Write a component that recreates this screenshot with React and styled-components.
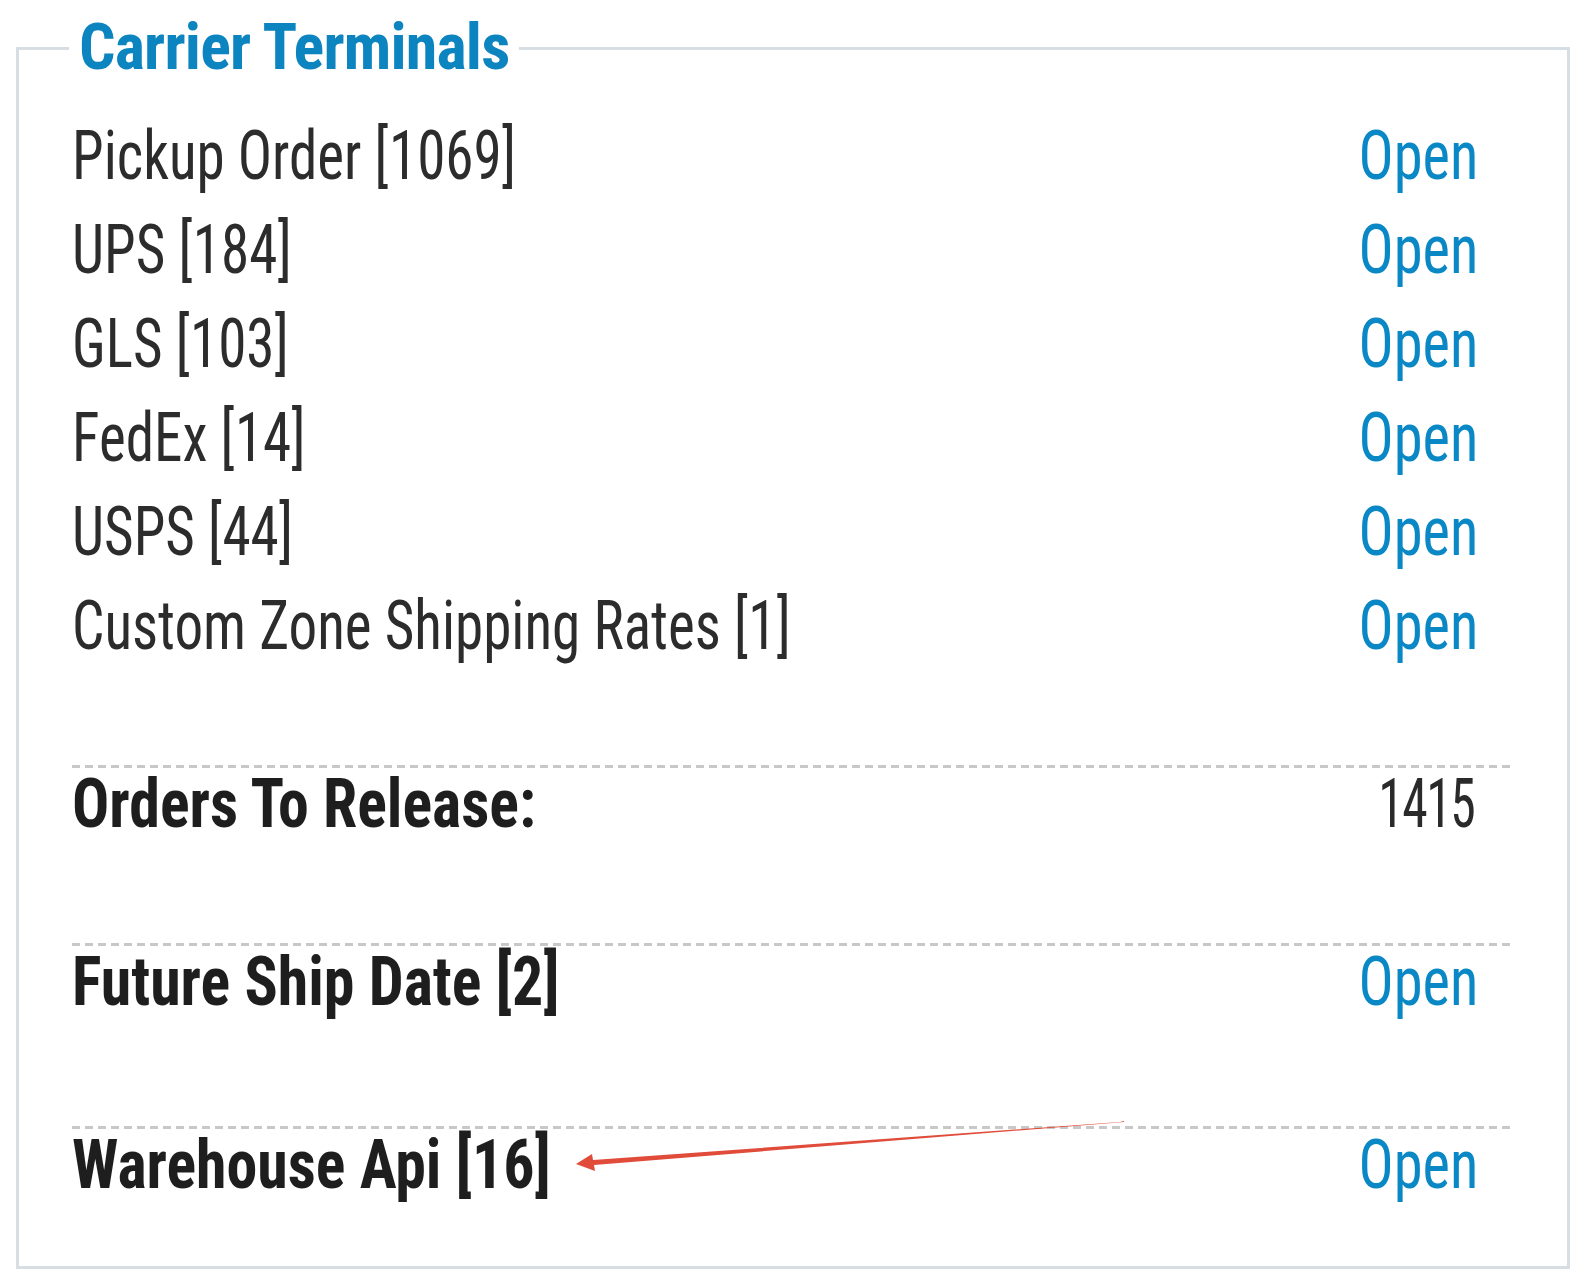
import React from 'react';
import styled, { createGlobalStyle } from 'styled-components';

const GlobalStyle = createGlobalStyle`
  html, body {
    margin: 0;
    padding: 0;
    background: #fff;
  }
  body {
    font-family: Roboto, "DejaVu Sans Condensed", sans-serif;
    font-stretch: 75%;
    color: #222;
  }
`;

const carriers = [
  { name: 'Pickup Order', count: 1069 },
  { name: 'UPS', count: 184 },
  { name: 'GLS', count: 103 },
  { name: 'FedEx', count: 14 },
  { name: 'USPS', count: 44 },
  { name: 'Custom Zone Shipping Rates', count: 1 },
];

const App = () => {
  return (
    <Page>
      <GlobalStyle />
      <Panel>
        <Legend>Carrier Terminals</Legend>
        <List>
          {carriers.map(c => (
            <Row key={c.name}>
              <Label>
                {c.name} [{c.count}]
              </Label>
              <OpenLink href="#">Open</OpenLink>
            </Row>
          ))}
        </List>

        <Section>
          <Row tall>
            <Label bold>Orders To Release:</Label>
            <Value>1415</Value>
          </Row>
        </Section>

        <Section gap={109}>
          <Row tall>
            <Label bold>Future Ship Date [2]</Label>
            <OpenLink href="#">Open</OpenLink>
          </Row>
        </Section>

        <Section gap={66}>
          <Row tall>
            <Label bold>Warehouse Api [16]</Label>
            <OpenLink href="#">Open</OpenLink>
          </Row>
        </Section>

        <Arrow viewBox="0 0 560 60" width="560" height="60">
          <polygon
            points="548,2 552,1 552,2 22,45 23,51 4,44 20,34 21,40"
            fill="#e04b3a"
          />
        </Arrow>
      </Panel>
    </Page>
  );
};

export default App;

const Page = styled.div`
  padding: 14px 2px 8px 16px;
`;

const Panel = styled.fieldset`
  position: relative;
  margin: 0;
  padding: 27px 56px 0 53px;
  min-height: 1160px;
  border: 3px solid #d6dee4;
  box-sizing: border-box;
`;

const Legend = styled.legend`
  margin-left: -3px;
  padding: 0 10px;
  font-size: 64px;
  font-weight: 700;
  line-height: 68px;
  color: #0b84c0;
  letter-spacing: -0.8px;
`;

const List = styled.div`
  display: flex;
  flex-direction: column;
  padding-bottom: 92px;
`;

const Row = styled.div`
  display: flex;
  align-items: center;
  justify-content: space-between;
  height: ${p => (p.tall ? 70 : 94)}px;
`;

const Label = styled.span`
  display: inline-block;
  font-size: 68px;
  font-weight: ${p => (p.bold ? 700 : 400)};
  color: ${p => (p.bold ? '#1e1e1e' : '#2c2c2c')};
  white-space: nowrap;
  transform: scaleX(${p => (p.bold ? 0.91 : 0.84)});
  transform-origin: left center;
`;

const OpenLink = styled.a`
  display: inline-block;
  font-size: 68px;
  color: #0a88c6;
  text-decoration: none;
  margin-right: 33px;
  transform: scaleX(0.86);
  transform-origin: right center;
`;

const Value = styled.span`
  display: inline-block;
  font-size: 68px;
  color: #2a2a2a;
  margin-right: 37px;
  letter-spacing: -2px;
  transform: scaleX(0.76);
  transform-origin: right center;
`;

const Section = styled.div`
  padding-top: 4px;
  padding-bottom: ${p => p.gap || 104}px;
  background-image: linear-gradient(to right, #c8c8c8 0 8px, transparent 8px 13px);
  background-size: 13px 3px;
  background-repeat: repeat-x;
  background-position: 0 0;
`;

const Arrow = styled.svg`
  position: absolute;
  left: 553px;
  top: 1038px;
  pointer-events: none;
`;
